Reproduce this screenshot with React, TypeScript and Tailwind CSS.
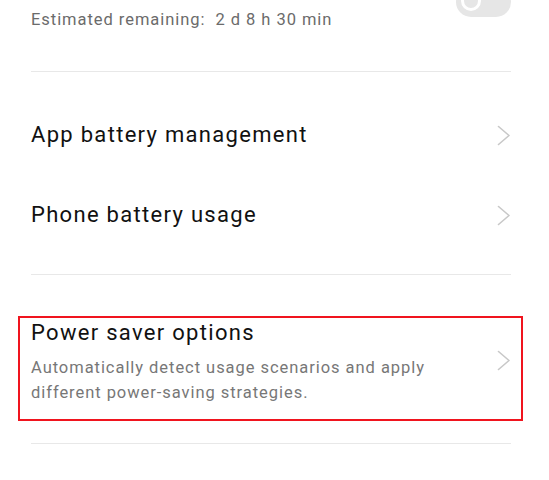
import React from "react";

function Chevron() {
  return (
    <svg width="14" height="21" viewBox="0 0 14 21" fill="none" className="shrink-0">
      <polyline
        points="1.5,1.5 12,10.5 1.5,19.5"
        stroke="#c8c8c8"
        strokeWidth="1.6"
        strokeLinecap="round"
        strokeLinejoin="round"
      />
    </svg>
  );
}

function Toggle() {
  return (
    <div className="relative mt-[-13px] h-[30px] w-[55px] shrink-0 rounded-full bg-[#e6e6e6]">
      <div className="absolute left-[5px] top-[4px] h-[20px] w-[20px] rounded-full border-[3px] border-white bg-[#e6e6e6]" />
    </div>
  );
}

function Row({ title }: { title: string }) {
  return (
    <div className="flex h-[80px] items-center justify-between">
      <span className="text-[22px] leading-[26px] tracking-[1.3px] text-[#111]">{title}</span>
      <Chevron />
    </div>
  );
}

export default function App() {
  return (
    <div
      className="min-h-[480px] w-[549px] overflow-hidden bg-white pl-[31px] pr-[38px]"
      style={{ fontFamily: "Roboto, 'Liberation Sans', sans-serif" }}
    >
      <div className="flex h-[71px] items-start justify-between">
        <span className="mt-[10px] text-[16.5px] leading-[20px] tracking-[0.95px] text-[#6b6b6b]">
          Estimated remaining:&nbsp; 2 d 8 h 30 min
        </span>
        <Toggle />
      </div>
      <div className="h-px bg-[#e8e8e8]" />

      <div className="pt-[23px]">
        <Row title="App battery management" />
        <Row title="Phone battery usage" />
      </div>
      <div className="mt-[19px] h-px bg-[#e8e8e8]" />

      <div className="ml-[-13px] mr-[-12px] mt-[41px] flex justify-between border-2 border-[#f0141e] pb-[14px] pl-[11px] pr-[10px] pt-[1.5px]">
        <div className="flex flex-col">
          <span className="text-[22px] leading-[26px] tracking-[1.3px] text-[#111]">Power saver options</span>
          <span className="mt-[9.5px] max-w-[440px] text-[16.5px] leading-[25px] tracking-[0.95px] text-[#777]">
            Automatically detect usage scenarios and apply different power-saving strategies.
          </span>
        </div>
        <div className="mt-[30px] self-start">
          <Chevron />
        </div>
      </div>
      <div className="mt-[22px] h-px bg-[#e8e8e8]" />
    </div>
  );
}
